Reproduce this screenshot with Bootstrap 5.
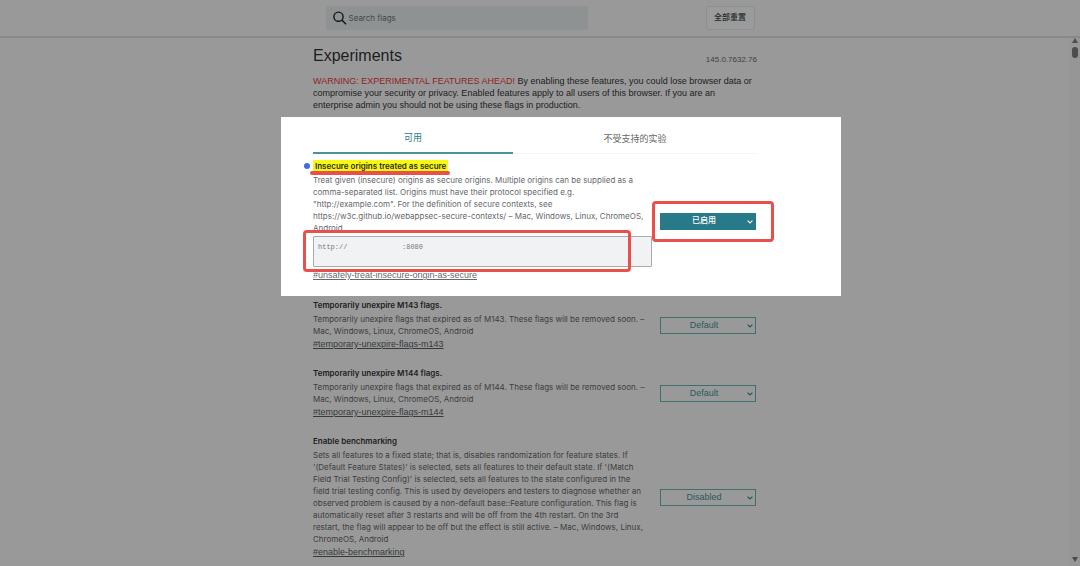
<!DOCTYPE html>
<html lang="zh-CN">
<head>
<meta charset="utf-8">
<meta name="viewport" content="width=device-width, initial-scale=1">
<title>Experiments</title>
<link href="https://cdn.jsdelivr.net/npm/bootstrap@5.3.0/dist/css/bootstrap.min.css" rel="stylesheet">
<style>
  :root { --teal: #28798a; --dim: #999; --dim-teal: #28595e; --mark-red: #e9504b; }
  body { background: var(--dim); color: #1c1d1e; font-family: "Liberation Sans", "Noto Sans CJK SC", sans-serif; font-size: 9px; line-height: 12px; }
  .page-shell { height: 100vh; overflow: hidden; }
  .top-bar { height: 38px; border-bottom: 2px solid #898989; }
  .top-inner { width: 429px; }
  .search-wrap { width: 262px; height: 24px; padding-left: 7px; background: #8f9292; border-radius: 2px; }
  .search-wrap input { font-size: 8px; color: #3c3e3f; outline: 0; margin-left: 2px; font-family: Inter, sans-serif; }
  .search-wrap input::placeholder { color: #454748; opacity: 1; }
  .reset-btn { width: 49px; height: 24px; font-size: 8px; line-height: 12px; color: #222a2c; border: 1px solid #8d9090; border-radius: 3px; background: #9b9b9b; font-weight: 500; }
  .content-col { width: 444px; max-width: 100%; }
  .page-title { font-size: 16px; line-height: 20px; font-weight: 400; }
  .version { font-size: 8px; color: #3f4142; }
  .blurb { padding-top: 9px; }
  .warn { color: #8f2424; }
  .spotlight { background: #fff; margin: 6px -84px 2px -32px; padding: 0 84px 13px 32px; }
  .tab-link { width: 200px; height: 37px; padding-top: 8px; color: #666; background: none; border: 0; border-bottom: 1px solid #f3f3f3; }
  .tab-link.active { color: var(--teal); border-bottom: 2px solid #4a929c; }
  .flag-row { margin-bottom: 14px; }
  .flag-row.first { padding-top: 5px; }
  .flag-text { width: 339px; white-space: nowrap; }
  .flag-name { font-family: Inter, sans-serif; font-size: 8px; line-height: 15px; font-weight: 600; }
  .flag-desc { font-family: Inter, sans-serif; font-size: 8px; color: #3b3d3e; }
  .flag-link { color: #35393b; line-height: 15px; }
  .spotlight .flag-desc, .spotlight .flag-link { color: #65696c; }
  .select-wrap { margin-right: 1px; }
  .flag-select { width: 96px; height: 17px; padding: 0 18px 0 10px; font-size: 9px; line-height: 14px; color: var(--dim-teal); background: transparent; border: 1px solid #40706e; border-radius: 0; appearance: none; text-align: center; text-align-last: center; }
  .flag-select.enabled { font-size: 8px; background: var(--teal); border-color: var(--teal); color: #fff; font-weight: 500; }
  .chevron { right: 3px; top: 6px; color: #1f565b; }
  .enabled + .chevron { color: #fff; }
  .hl { background: #f8f815; color: #2a2a10; padding: 0 2px; line-height: 12px; display: inline-block; }
  .hl-line { left: -3px; top: 12px; width: 140px; height: 4px; border-radius: 2px; background: var(--mark-red); }
  .dot { left: -9px; top: 4px; width: 6px; height: 6px; border-radius: 50%; background: #3c6fe0; }
  .origins { height: 31px; margin: 2px 0 1px; padding: 4px; font-family: "Liberation Mono", monospace; font-size: 7px; line-height: 12px; color: #777; background: #f1f2f3; border: 1px solid #aaa; border-radius: 1px; resize: none; overflow: hidden; white-space: pre; }
  .box-mark { border: 3px solid var(--mark-red); border-radius: 4px; pointer-events: none; }
  .mark-input { inset: -6px 21px -5px -10px; }
  .mark-select { inset: -12px -18px -12px -8px; }
  .scroll-rail { width: 10px; background: #969696; }
  .thumb { width: 6px; height: 11px; border-radius: 3px; background: #4c4c4c; }
</style>
</head>
<body>
<div class="page-shell d-flex flex-column">
  <header class="top-bar d-flex justify-content-center flex-shrink-0">
    <div class="top-inner d-flex justify-content-between align-items-center">
      <label class="search-wrap d-flex align-items-center">
        <svg width="14" height="14" viewBox="0 0 14 14" fill="none" stroke="#151515" stroke-width="1.4" class="flex-shrink-0" aria-hidden="true"><circle cx="5.5" cy="5.7" r="4.6"/><path d="M8.8 9l4.3 4.3"/></svg>
        <input type="text" class="border-0 bg-transparent flex-grow-1 p-0" placeholder="Search flags" aria-label="Search flags">
      </label>
      <button type="button" class="reset-btn p-0">全部重置</button>
    </div>
  </header>
  <div class="d-flex flex-grow-1">
    <main class="flex-grow-1 d-flex justify-content-center">
      <div class="content-col">
        <div class="d-flex justify-content-between align-items-end pt-2">
          <h1 class="page-title mb-0">Experiments</h1>
          <span class="version">145.0.7632.76</span>
        </div>
        <p class="mb-0 text-nowrap blurb"><span class="warn">WARNING: EXPERIMENTAL FEATURES AHEAD!</span> By enabling these features, you could lose browser data or<br>compromise your security or privacy. Enabled features apply to all users of this browser. If you are an<br>enterprise admin you should not be using these flags in production.</p>

        <section class="spotlight">
          <div class="d-flex" role="tablist">
            <button type="button" class="tab-link active" role="tab" aria-selected="true">可用</button>
            <button type="button" class="tab-link flex-grow-1" role="tab" aria-selected="false">不受支持的实验</button>
          </div>
          <div class="flag-row first mb-0 d-flex justify-content-between align-items-center">
            <div class="flag-text">
              <h2 class="flag-name mb-0 position-relative"><span class="dot position-absolute"></span><span class="hl">Insecure origins treated as secure</span><span class="hl-line position-absolute"></span></h2>
              <label class="flag-desc d-block" for="origins">Treat given (insecure) origins as secure origins. Multiple origins can be supplied as a<br>comma-separated list. Origins must have their protocol specified e.g.<br>"http://example.com". For the definition of secure contexts, see<br>https://w3c.github.io/webappsec-secure-contexts/ – Mac, Windows, Linux, ChromeOS,<br>Android</label>
              <div class="position-relative">
                <textarea id="origins" class="origins d-block w-100" spellcheck="false">http://             :8080</textarea>
                <span class="box-mark mark-input position-absolute"></span>
              </div>
              <a class="flag-link d-block" href="#unsafely">#unsafely-treat-insecure-origin-as-secure</a>
            </div>
            <div class="select-wrap position-relative">
              <select class="flag-select enabled d-block" aria-label="Insecure origins treated as secure"><option>已启用</option></select>
              <svg class="chevron position-absolute" width="6" height="6" viewBox="0 0 6 6" fill="none" stroke="currentColor" stroke-width="1.2"><path d="M.6 1.6L3 4l2.4-2.4"/></svg>
              <span class="box-mark mark-select position-absolute"></span>
            </div>
          </div>
        </section>

        <div class="flag-row d-flex justify-content-between align-items-center">
          <div class="flag-text">
            <h2 class="flag-name mb-0">Temporarily unexpire M143 flags.</h2>
            <div class="flag-desc">Temporarily unexpire flags that expired as of M143. These flags will be removed soon. –<br>Mac, Windows, Linux, ChromeOS, Android</div>
            <a class="flag-link d-block" href="#m143">#temporary-unexpire-flags-m143</a>
          </div>
          <div class="select-wrap position-relative">
            <select class="flag-select d-block" aria-label="Temporarily unexpire M143 flags."><option>Default</option></select>
            <svg class="chevron position-absolute" width="6" height="6" viewBox="0 0 6 6" fill="none" stroke="currentColor" stroke-width="1.2"><path d="M.6 1.6L3 4l2.4-2.4"/></svg>
          </div>
        </div>

        <div class="flag-row d-flex justify-content-between align-items-center">
          <div class="flag-text">
            <h2 class="flag-name mb-0">Temporarily unexpire M144 flags.</h2>
            <div class="flag-desc">Temporarily unexpire flags that expired as of M144. These flags will be removed soon. –<br>Mac, Windows, Linux, ChromeOS, Android</div>
            <a class="flag-link d-block" href="#m144">#temporary-unexpire-flags-m144</a>
          </div>
          <div class="select-wrap position-relative">
            <select class="flag-select d-block" aria-label="Temporarily unexpire M144 flags."><option>Default</option></select>
            <svg class="chevron position-absolute" width="6" height="6" viewBox="0 0 6 6" fill="none" stroke="currentColor" stroke-width="1.2"><path d="M.6 1.6L3 4l2.4-2.4"/></svg>
          </div>
        </div>

        <div class="flag-row mb-0 d-flex justify-content-between align-items-center">
          <div class="flag-text">
            <h2 class="flag-name mb-0">Enable benchmarking</h2>
            <div class="flag-desc">Sets all features to a fixed state; that is, disables randomization for feature states. If<br>'(Default Feature States)' is selected, sets all features to their default state. If '(Match<br>Field Trial Testing Config)' is selected, sets all features to the state configured in the<br>field trial testing config. This is used by developers and testers to diagnose whether an<br>observed problem is caused by a non-default base::Feature configuration. This flag is<br>automatically reset after 3 restarts and will be off from the 4th restart. On the 3rd<br>restart, the flag will appear to be off but the effect is still active. – Mac, Windows, Linux,<br>ChromeOS, Android</div>
            <a class="flag-link d-block" href="#bench">#enable-benchmarking</a>
          </div>
          <div class="select-wrap position-relative">
            <select class="flag-select d-block" aria-label="Enable benchmarking"><option>Disabled</option></select>
            <svg class="chevron position-absolute" width="6" height="6" viewBox="0 0 6 6" fill="none" stroke="currentColor" stroke-width="1.2"><path d="M.6 1.6L3 4l2.4-2.4"/></svg>
          </div>
        </div>
      </div>
    </main>
    <div class="scroll-rail d-flex flex-column align-items-center pt-0 pb-1 flex-shrink-0" aria-hidden="true">
      <svg width="6" height="5" viewBox="0 0 6 5" fill="#4c4c4c" class="flex-shrink-0"><path d="M3 0l3 5H0z"/></svg>
      <div class="thumb mt-1"></div>
      <svg class="mt-auto" width="6" height="5" viewBox="0 0 6 5" fill="#4c4c4c"><path d="M0 0h6L3 5z"/></svg>
    </div>
  </div>
</div>
<script src="https://cdn.jsdelivr.net/npm/bootstrap@5.3.0/dist/js/bootstrap.bundle.min.js"></script>
</body>
</html>
